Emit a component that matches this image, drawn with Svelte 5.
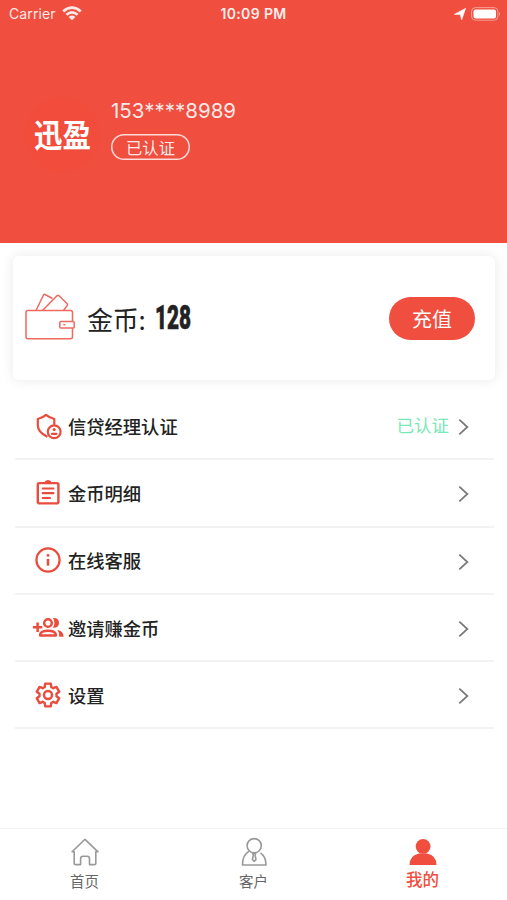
<script>
  const rows = [
    { icon: 'shield', label: '信贷经理认证', status: '已认证' },
    { icon: 'list', label: '金币明细' },
    { icon: 'info', label: '在线客服' },
    { icon: 'group', label: '邀请赚金币' },
    { icon: 'gear', label: '设置' }
  ];

  // Outline of the six-toothed settings wheel.
  const gear = [0, 60, 120, 180, 240, 300]
    .flatMap((a) => [[a - 22, 8.6], [a - 14, 11.7], [a + 14, 11.7], [a + 22, 8.6]])
    .map(([a, r]) => {
      const t = (a * Math.PI) / 180;
      return `${(16 + r * Math.sin(t)).toFixed(2)},${(14 - r * Math.cos(t)).toFixed(2)}`;
    })
    .join(' ');
</script>

<div class="screen">
  <header>
    <div class="status">
      <div class="carrier">
        <span>Carrier</span>
        <svg width="20" height="15" viewBox="0 0 20 15" fill="none" stroke="#fff" stroke-width="2.7">
          <path d="M1.2 5.4Q10-2 18.8 5.4M4.4 8.7Q10 4.1 15.6 8.7" />
          <path d="M6.6 10.9Q10 8 13.4 10.9L10 14.3Z" fill="#fff" stroke="none" />
        </svg>
      </div>
      <div class="time">10:09 PM</div>
      <div class="power">
        <svg width="12" height="12" viewBox="0 0 12 12"><path d="M.1 6.5 11.7.2 7.7 11.9 6.2 6.6Z" fill="#fff" stroke="#fff" stroke-width=".5" /></svg>
        <svg width="31" height="14" viewBox="0 0 31 14">
          <rect x=".6" y=".6" width="26.3" height="12.6" rx="3.8" fill="none" stroke="#fff" stroke-opacity=".45" />
          <rect x="2.5" y="2.4" width="22.5" height="9" rx="2" fill="#fff" />
          <path d="M28.2 4.8q2 2.1 0 4.2Z" fill="#fff" fill-opacity=".5" />
        </svg>
      </div>
    </div>
    <div class="profile">
      <div class="avatar"><span>迅盈</span></div>
      <div class="who">
        <div class="phone">153****8989</div>
        <div class="badge">已认证</div>
      </div>
    </div>
  </header>

  <section class="card">
    <svg class="wallet" width="52" height="50" viewBox="0 0 52 50" fill="none" stroke="#ec6a60" stroke-width="1.5" stroke-linejoin="round">
      <path d="M12 18.5 19.5 3q.5-1 1.5-.5l7.5 4M18.5 18.5 33 3.8q1-.9 2 0l8.2 8q.8.9 0 1.8L39.5 18.5" />
      <path d="M48.5 29.4V20.5q0-2-2-2H4q-2 0-2 2v24.3q0 2 2 2h42.5q2 0 2-2V36" />
      <rect x="35.8" y="29.4" width="14.4" height="6.7" rx="1" />
      <path d="M39.3 32.7h2" />
    </svg>
    <div class="coins">金币:</div>
    <div class="amount"><span>128</span></div>
    <button>充值</button>
  </section>

  <main>
    {#each rows as row}
      <div class="row">
        <svg class="icon" width="32" height="28" viewBox="0 0 32 28" fill="none" stroke="#ea4c3e" stroke-width="2.2" stroke-linejoin="round" stroke-linecap="round">
          {#if row.icon === 'shield'}
            <path d="M14.6 24.3Q5.8 20 5.8 13V7Q10.5 5.8 14 2.8 17.7 5.8 22.3 7V12" />
            <circle cx="22.2" cy="19.8" r="6.4" />
            <circle cx="22.2" cy="17.5" r="1.6" fill="#ea4c3e" stroke="none" />
            <path d="M19.9 21.8h4.6" stroke-width="2.3" />
          {:else if row.icon === 'list'}
            <rect x="5.8" y="4.1" width="20.6" height="20.3" rx="1.6" stroke-width="2.4" />
            <path d="M12.7 4Q13 1.6 16 1.6T19.3 4Z" fill="#ea4c3e" stroke-width="1" />
            <path d="M10.8 9.5h10.6M10.8 14.2h10.6M10.8 19h7.2" />
          {:else if row.icon === 'info'}
            <circle cx="16" cy="14" r="11.6" />
            <circle cx="16" cy="9.4" r="1.4" fill="#ea4c3e" stroke="none" />
            <path d="M16 12.9v6.8" stroke-width="2.5" stroke-linecap="butt" />
          {:else if row.icon === 'group'}
            <path d="M.9 13.2h9.4M5.6 8.5v9.4" stroke-width="2.5" stroke-linecap="butt" />
            <circle cx="16" cy="9" r="3.8" stroke-width="2.5" />
            <path d="M8.2 21.5V20.4Q8.7 16.8 16 16.8T23.8 20.4V21.5Z" stroke-width="2.5" />
            <path d="M20.9 4.1q6.1-.4 6.1 4.8t-6.1 4.8q3.1-4.8 0-9.6ZM25.4 16q6.2 1.1 6.2 6.7h-4.3q.4-3.9-1.9-6.7Z" fill="#ea4c3e" stroke="none" />
          {:else}
            <polygon points={gear} stroke-width="2.4" />
            <circle cx="16" cy="14" r="4" stroke-width="2.4" />
          {/if}
        </svg>
        <span class="label">{row.label}</span>
        {#if row.status}<span class="state">{row.status}</span>{/if}
        <svg class="chevron" width="11" height="18" viewBox="0 0 11 18" fill="none" stroke="#777" stroke-width="1.7"><path d="m1.3 1.7 8.1 7.3-8.1 7.3" /></svg>
      </div>
    {/each}
  </main>

  <nav>
    <div class="tab">
      <svg width="30" height="30" viewBox="0 0 30 30" fill="none" stroke="#999" stroke-width="1.6" stroke-linejoin="round" stroke-linecap="round">
        <path d="M4.2 14.8H2.1L15 2.3 28 14.8H25.8V26.6q0 1-1 1H19.5V21.7q0-2.4-2.4-2.4H13q-2.4 0-2.4 2.4V27.6H5.2q-1 0-1-1Z" />
      </svg>
      <span>首页</span>
    </div>
    <div class="tab">
      <svg width="30" height="30" viewBox="0 0 30 30" fill="none" stroke="#999" stroke-width="1.6" stroke-linejoin="round" stroke-linecap="round">
        <circle cx="15.2" cy="8.7" r="7.1" />
        <path d="M10 14.2Q3.3 18.5 3.5 28H27Q27 19.8 22 16.3M13.7 16.3h3l-.6 2 .9 4.2-1.8 2-1.8-2 .9-4.2Z" />
      </svg>
      <span>客户</span>
    </div>
    <div class="tab active">
      <svg width="30" height="30" viewBox="0 0 30 30" fill="#f04e3e"><circle cx="15.1" cy="9.4" r="7.4" /><path d="M1.5 28Q1.6 18.2 11 16.4H19.2Q28.4 18.2 28.5 28Z" /></svg>
      <span>我的</span>
    </div>
  </nav>
</div>

<style>
  :global(body) { margin: 0; }
  .screen { width: 507px; height: 900px; display: flex; flex-direction: column; background: #fff; overflow: hidden; font-family: "Liberation Sans", "Noto Sans CJK SC", sans-serif; color: #222; }
  header { height: 243px; flex: none; background: #f04e3e; color: #fff; }
  .status { height: 28px; display: grid; grid-template-columns: 1fr auto 1fr; align-items: center; font: 14px/28px Inter, sans-serif; }
  .carrier { display: flex; align-items: center; gap: 6px; padding-left: 9px; opacity: .88; letter-spacing: .1px; }
  .carrier svg { margin-top: -2px; }
  .time { font-weight: 600; font-size: 14px; letter-spacing: .35px; opacity: .9; }
  .power { display: flex; justify-content: flex-end; align-items: center; gap: 5px; padding-right: 5px; }
  .power svg:last-child { margin-top: -1px; }
  .profile { display: flex; padding: 69px 0 0 25px; }
  .avatar { width: 75px; height: 75px; border-radius: 50%; background: #f24c3d; display: flex; align-items: center; justify-content: center; font: 700 28.5px/40px "Noto Sans CJK SC", sans-serif; }
  .avatar span { margin-top: -1px; transform: scaleY(1.1); }
  .who { padding-left: 11px; }
  .phone { margin-top: 1px; font: 20.5px/26px Inter, sans-serif; letter-spacing: 0; opacity: .88; white-space: nowrap; }
  .badge { width: 79px; height: 26px; margin-top: 10px; box-shadow: inset 0 0 0 1.5px rgba(255, 255, 255, .8); border-radius: 13px; font: 16.3px/26px "Noto Sans CJK SC", sans-serif; text-align: center; color: rgba(255, 255, 255, .9); }
  .card { box-sizing: border-box; flex: none; width: 482px; height: 124px; margin: 13px 0 0 13px; padding: 0 20px 0 11px; border-radius: 6px; display: flex; align-items: center; box-shadow: 0 0 13px rgba(0, 0, 0, .09); background: #fff; }
  .wallet { margin-top: -2px; }
  .coins { margin-left: 11px; width: 68px; margin-top: 2px; font: 26px/38px "Noto Sans CJK SC", sans-serif; letter-spacing: -.2px; white-space: nowrap; }
  .amount { width: 40px; font: 900 33px/38px Roboto, sans-serif; }
  .amount span { display: inline-block; transform: scaleX(.63); transform-origin: left; -webkit-text-stroke: .6px #222; }
  button { margin-left: auto; width: 86px; height: 43px; padding: 0; border: 0; border-radius: 22px; background: #f04e3e; color: #fff; font: 20px/41px "Noto Sans CJK SC", sans-serif; }
  main { margin: 13px 13px 0 15px; flex: 1; }
  .row { box-sizing: border-box; height: 67.3px; border-bottom: 2px solid #f3f3f3; display: flex; align-items: center; padding: 0 25px 0 17px; }
  .label { margin-left: 4px; font: 500 18.3px/28px "Noto Sans CJK SC", sans-serif; }
  .state { margin-left: auto; margin-right: 9px; margin-top: -1px; font: 17.5px/28px "Noto Sans CJK SC", sans-serif; color: #79e8b7; }
  .chevron { margin-left: auto; margin-top: 3px; }
  .state + .chevron { margin-left: 0; }
  nav { box-sizing: border-box; height: 72px; flex: none; border-top: 1px solid #f2f2f2; display: flex; }
  .tab { flex: 1; display: flex; flex-direction: column; align-items: center; padding-top: 8px; font: 14.5px/24px "Noto Sans CJK SC", sans-serif; color: #666; }
  .tab span { margin-top: 2px; }
  .active { color: #f04e3e; font-size: 16.5px; font-weight: 500; }
  .active span { margin-top: 0; }
</style>
